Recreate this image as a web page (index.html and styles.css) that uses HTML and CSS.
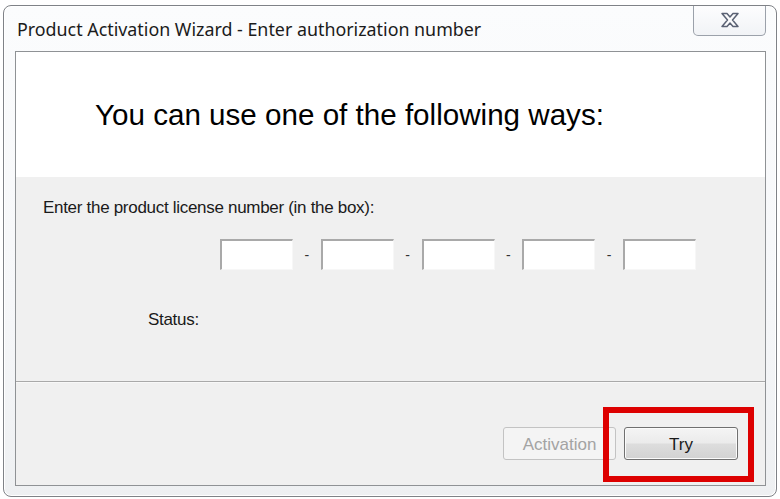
FILE: index.html
```html
<!DOCTYPE html>
<html>
<head>
<meta charset="utf-8">
<link rel="stylesheet" href="styles.css">
</head>
<body>
<div class="window">
  <div class="titlebar">
    <div class="title">Product Activation Wizard - Enter authorization number</div>
    <div class="close">
      <svg width="20" height="16" viewBox="0 0 20 16">
        <path d="M2 1.5 H7 L10 5 L13 1.5 H18 L12.5 8 L18 14.5 H13 L10 11 L7 14.5 H2 L7.5 8 Z" fill="#fbfbfc" stroke="#5b6274" stroke-width="1.5" stroke-linejoin="round"/>
      </svg>
    </div>
  </div>
  <div class="client">
    <div class="header">
      <h1 class="heading">You can use one of the following ways:</h1>
    </div>
    <div class="body">
      <div class="label">Enter the product license number (in the box):</div>
      <div class="keys">
        <div class="key"></div><span class="dash">-</span>
        <div class="key"></div><span class="dash">-</span>
        <div class="key"></div><span class="dash">-</span>
        <div class="key"></div><span class="dash">-</span>
        <div class="key"></div>
      </div>
      <div class="status">Status:</div>
    </div>
    <div class="separator"></div>
    <div class="footer">
      <button class="btn btn-disabled">Activation</button>
      <button class="btn btn-try">Try</button>
    </div>
  </div>
  <div class="highlight"></div>
</div>
</body>
</html>
```

FILE: styles.css
```css
html, body {
  margin: 0;
  padding: 0;
  background: #ffffff;
}
body {
  width: 780px;
  height: 499px;
  overflow: hidden;
}
.window {
  position: relative;
  box-sizing: border-box;
  margin: 5px 0 0 3px;
  width: 774px;
  height: 492px;
  border: 1px solid #7f8287;
  border-radius: 8px;
  background: linear-gradient(to bottom, #fbfcfd 0%, #f6f7f9 60%, #eef0f2 100%);
  box-shadow: inset 0 0 0 1px #ffffff;
  padding: 0 10px 10px 11px;
  display: flex;
  flex-direction: column;
}
.titlebar {
  height: 45px;
  display: flex;
  justify-content: space-between;
  align-items: flex-start;
}
.title {
  font-family: "Noto Sans", "Open Sans", sans-serif;
  font-size: 17.85px;
  color: #1b1b1b;
  margin-top: 13px;
  margin-left: 2px;
  line-height: 20px;
}
.close {
  box-sizing: border-box;
  width: 73px;
  height: 30px;
  border: 1px solid #9ba1aa;
  border-top: none;
  border-radius: 0 0 5px 5px;
  background: linear-gradient(to bottom, #fdfdfe 0%, #f1f3f6 100%);
  display: flex;
  align-items: center;
  justify-content: center;
  padding-bottom: 1px;
}
.close svg { display: block; }
.client {
  flex: 1;
  border: 1px solid #8f9295;
  background: #f0f0f0;
  display: flex;
  flex-direction: column;
  font-family: "Liberation Sans", Arial, sans-serif;
  color: #1a1a1a;
}
.header {
  height: 125px;
  background: #ffffff;
  box-sizing: border-box;
  padding: 46px 0 0 79px;
}
.heading {
  margin: 0;
  font-weight: normal;
  font-family: "Liberation Sans", Arial, sans-serif;
  font-size: 29.6px;
  line-height: 34px;
  color: #000000;
}
.body {
  height: 204px;
  box-sizing: border-box;
  padding: 21px 0 0 27px;
}
.label {
  font-size: 17px;
  line-height: 20px;
  letter-spacing: -0.3px;
}
.keys {
  display: flex;
  align-items: center;
  margin-top: 21px;
  margin-left: 177px;
}
.key {
  box-sizing: border-box;
  width: 73px;
  height: 31px;
  background: #ffffff;
  border-top: 2px solid #a9a9a9;
  border-left: 2px solid #a9a9a9;
  border-right: 1px solid #f7f7f7;
  border-bottom: 1px solid #f7f7f7;
}
.dash {
  width: 27.75px;
  text-align: center;
  font-size: 14px;
  color: #333;
  line-height: 14px;
}
.status {
  margin-top: 40px;
  margin-left: 105px;
  font-size: 17px;
  line-height: 20px;
  letter-spacing: -0.3px;
}
.separator {
  height: 1px;
  background: #a9a9a9;
  border-bottom: 1px solid #f8f8f8;
}
.footer {
  flex: 1;
  display: flex;
  justify-content: flex-end;
  align-items: flex-start;
  gap: 8px;
  padding: 44px 27px 0 0;
}
.btn {
  box-sizing: border-box;
  width: 114px;
  height: 33px;
  border-radius: 3px;
  font-family: "Liberation Sans", Arial, sans-serif;
  font-size: 17px;
  padding: 2px 0 0 0;
}
.btn-disabled {
  width: 113px;
  border: 1px solid #c3c3c3;
  background: #f4f4f4;
  color: #a3a3a3;
}
.btn-try {
  border: 1px solid #707070;
  background: linear-gradient(to bottom, #f4f4f4 0%, #ebebeb 48%, #dddddd 52%, #d2d2d2 100%);
  color: #1a1a1a;
  box-shadow: inset 0 0 0 1px #fbfbfb;
}
.highlight {
  position: absolute;
  left: 599px;
  top: 401px;
  width: 139px;
  height: 63px;
  border: 6px solid #dd0000;
}
```
